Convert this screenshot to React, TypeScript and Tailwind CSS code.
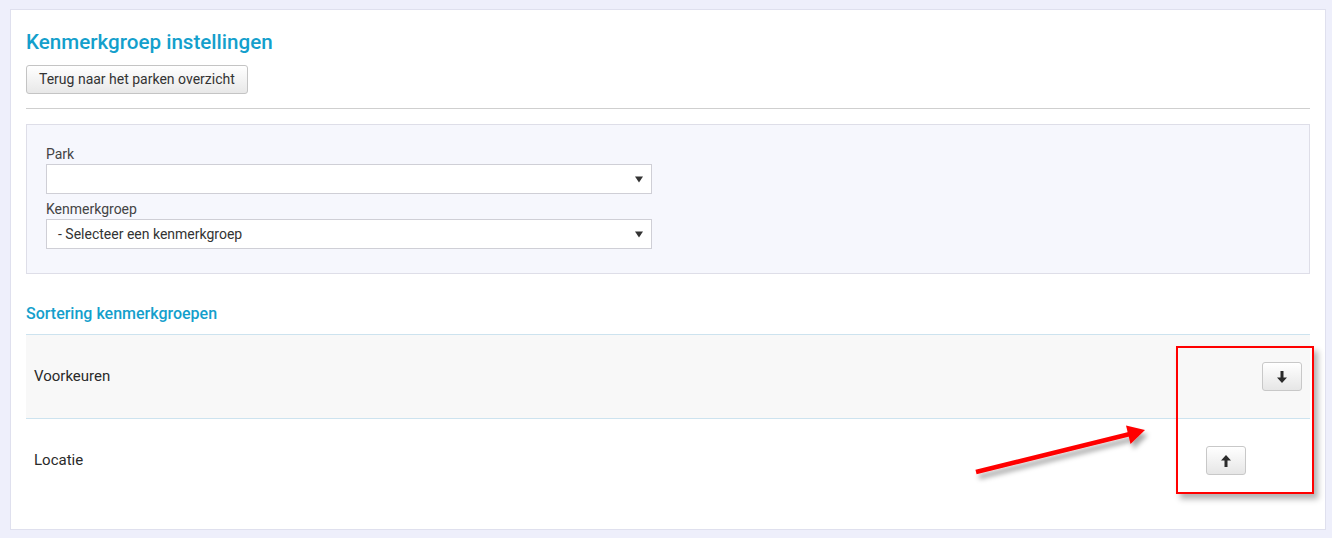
import React from 'react';

const ArrowButton = ({ dir }: { dir: 'up' | 'down' }) => (
  <button className="flex h-[29px] w-[40px] items-center justify-center rounded-[3px] border border-[#c8c8c8] bg-gradient-to-b from-white to-[#e6e6e6] shadow-[inset_0_1px_0_rgba(255,255,255,0.6)]">
    <svg width="10" height="12" viewBox="0 0 10 12" className={dir === 'up' ? 'rotate-180' : ''}>
      <path d="M3.5 0h3v6.5H10L5 12 0 6.5h3.5z" fill="#2b2b2b" />
    </svg>
  </button>
);

const SelectBox = ({ value }: { value?: string }) => (
  <div className="flex h-[30px] w-[606px] items-center justify-between border border-[#cfcfd6] bg-white pl-[11px] pr-[8px] text-[14px] text-[#333]">
    <span>{value}</span>
    <svg width="8" height="8" viewBox="0 0 8 8">
      <path d="M0 1.5h8L4 7.5z" fill="#333" />
    </svg>
  </div>
);

export default function App() {
  return (
    <div className="relative min-h-[538px] w-full bg-[#eeeffb] pt-[9px] pl-[10px] pr-[6px] pb-[8px] font-['Roboto',sans-serif]">
      <div className="flex h-[521px] flex-col border border-[#dfe0ee] bg-white px-[15px] pt-[20px]">
        <h1 className="text-[20.6px] font-medium leading-[24px] text-[#149fcc]">Kenmerkgroep instellingen</h1>
        <div className="mt-[11px]">
          <button className="h-[29px] rounded-[3px] border border-[#c4c4c4] bg-gradient-to-b from-white to-[#e8e8e8] px-[12px] text-[14px] text-[#333]">
            Terug naar het parken overzicht
          </button>
        </div>
        <div className="mt-[14px] border-t border-[#cfcfcf]" />

        <div className="mt-[15px] flex h-[150px] flex-col border border-[#dedee8] bg-[#f6f7fd] px-[19px] pt-[20px]">
          <label className="text-[14px] leading-[18px] text-[#444]">Park</label>
          <div className="mt-[1px]">
            <SelectBox />
          </div>
          <label className="mt-[6px] text-[14px] leading-[18px] text-[#444]">Kenmerkgroep</label>
          <div className="mt-[1px]">
            <SelectBox value="- Selecteer een kenmerkgroep" />
          </div>
        </div>

        <h2 className="mt-[29px] text-[16px] font-medium leading-[22px] text-[#149fcc]">Sortering kenmerkgroepen</h2>
        <div className="mt-[9px] border-t border-[#cde3ef]">
          <div className="flex h-[84px] items-center justify-between border-b border-[#cde3ef] bg-[#f8f8f8] pl-[8px] pr-[8px]">
            <span className="text-[15px] text-[#2a2a2a]">Voorkeuren</span>
            <ArrowButton dir="down" />
          </div>
          <div className="flex h-[83px] items-center justify-between pl-[8px] pr-[64px]">
            <span className="text-[15px] text-[#2a2a2a]">Locatie</span>
            <ArrowButton dir="up" />
          </div>
        </div>
      </div>

      {/* annotation overlay */}
      <div className="pointer-events-none absolute left-[1176px] top-[346px] h-[148px] w-[138px] border-2 border-[#f00] shadow-[4px_5px_6px_rgba(0,0,0,0.3)]" />
      <svg className="pointer-events-none absolute left-0 top-0" width="1332" height="538">
        <defs>
          <filter id="sh" x="-20%" y="-50%" width="140%" height="200%">
            <feDropShadow dx="3" dy="5" stdDeviation="2.5" floodColor="#000" floodOpacity="0.35" />
          </filter>
        </defs>
        <g filter="url(#sh)">
          <line x1="976" y1="472" x2="1134" y2="433" stroke="#f00" strokeWidth="4.5" />
          <path d="M1126 425.5L1145 430L1130.5 444z" fill="#f00" />
        </g>
      </svg>
    </div>
  );
}
